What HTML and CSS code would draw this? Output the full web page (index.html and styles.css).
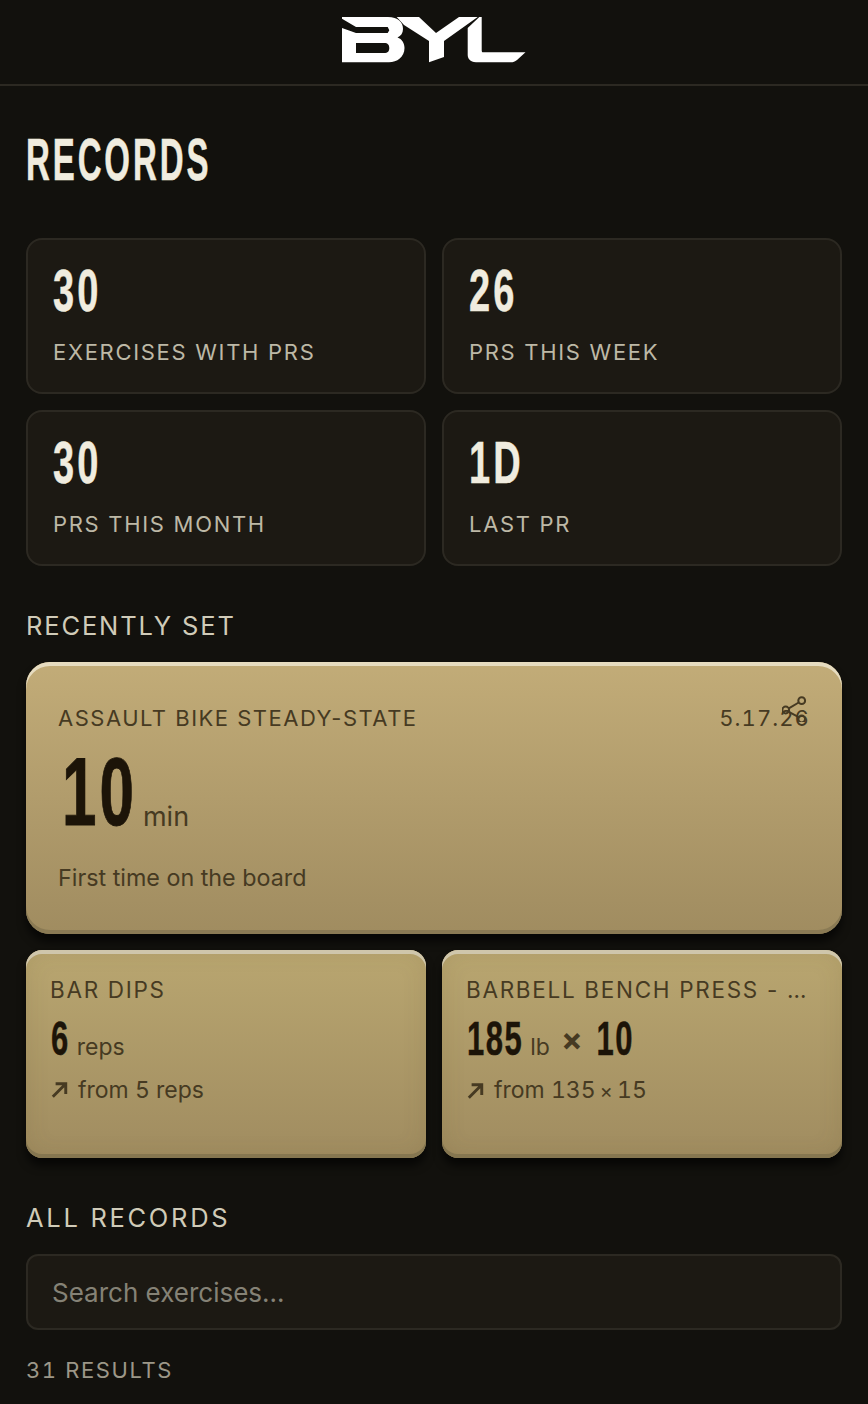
FILE: index.html
```html
<!DOCTYPE html>
<html lang="en">
<head>
<meta charset="utf-8">
<title>Records</title>
<link rel="stylesheet" href="styles.css">
</head>
<body>
<header class="topbar">
  <svg class="logo" viewBox="0 0 184 46" aria-label="BYL">
    <path fill="#fff" fill-rule="evenodd" d="M0 0H46C56 0 61 5 61 12C61 16 59 19 55.5 20.5C60 22 62.5 26 62.5 31C62.5 40 55 45.3 47 45.3H0V11L14 16H45.7L47.3 13.3L45.7 10H14L0 1.7ZM14 26V36H42C46 36 47.3 34 47.3 31C47.3 28 46 26 42 26Z"/>
    <path fill="#fff" d="M54.7 0H77L94 16L117 0H135.7L102 24V40L87 45.3V24L62 8Z"/>
    <path fill="#fff" d="M137.3 0H139.7V33C139.7 34.5 140 35.3 141 35.3H183.5L175 43C173 44.5 171 45.3 169 45.3H134C128 45.3 125.7 41 125.7 38V11Z"/>
  </svg>
</header>
<main class="page">
  <h1 class="title"><span class="cond">RECORDS</span></h1>
  <section class="stats">
    <div class="stat"><div class="stat-num"><span class="cond">30</span></div><div class="stat-label">EXERCISES WITH PRS</div></div>
    <div class="stat"><div class="stat-num"><span class="cond">26</span></div><div class="stat-label">PRS THIS WEEK</div></div>
    <div class="stat"><div class="stat-num"><span class="cond">30</span></div><div class="stat-label">PRS THIS MONTH</div></div>
    <div class="stat"><div class="stat-num"><span class="cond">1D</span></div><div class="stat-label">LAST PR</div></div>
  </section>
  <h2 class="section-head">RECENTLY SET</h2>
  <article class="hero gold">
    <div class="hero-top">
      <span class="hero-name">ASSAULT BIKE STEADY-STATE</span>
      <span class="hero-date">5.17.26</span>
    </div>
    <svg class="share" viewBox="0 0 28 28" aria-label="Share">
      <circle cx="19.7" cy="6.7" r="3.4"/><circle cx="3.7" cy="16" r="3.4"/><circle cx="19.7" cy="25" r="3.4"/>
      <path d="M6.8 14.3L16.7 8.5M6.8 17.8L16.7 23.2"/>
    </svg>
    <div class="hero-value"><span class="cond hero-num">10</span><span class="hero-unit">min</span></div>
    <div class="hero-note">First time on the board</div>
  </article>
  <section class="pair">
    <article class="mini gold">
      <div class="mini-name">BAR DIPS</div>
      <div class="mini-value"><span class="cond mini-num">6</span><span class="mini-unit">reps</span></div>
      <div class="mini-from"><svg class="arrow" viewBox="0 0 16 16"><path d="M2.5 14L14 2.5M5 2.5H14V11.5"/></svg><span>from 5 reps</span></div>
    </article>
    <article class="mini gold">
      <div class="mini-name">BARBELL BENCH PRESS - …</div>
      <div class="mini-value"><span class="cond mini-num">185</span><span class="mini-unit lb">lb</span><span class="times">×</span><span class="cond mini-num">10</span></div>
      <div class="mini-from"><svg class="arrow" viewBox="0 0 16 16"><path d="M2.5 14L14 2.5M5 2.5H14V11.5"/></svg><span>from 135 <span class="small-x">×</span> 15</span></div>
    </article>
  </section>
  <h2 class="section-head all-head">ALL RECORDS</h2>
  <input class="search" type="text" placeholder="Search exercises…">
  <div class="results">31 RESULTS</div>
</main>
</body>
</html>
```
FILE: styles.css
```css
* { box-sizing: border-box; }
html, body { margin: 0; padding: 0; }
body {
  background: #12110d;
  color: #f0ecdf;
  font-family: Inter, "Liberation Sans", Arial, sans-serif;
  height: 1404px;
  overflow: hidden;
}
.topbar {
  height: 86px;
  border-bottom: 2px solid #2c2922;
  display: flex;
  justify-content: center;
  padding-top: 17px;
}
.logo { width: 184px; height: 46px; display: block; }
.page { padding: 0 26px; }
.cond {
  font-family: "Liberation Sans Narrow", "Liberation Sans", sans-serif;
  font-weight: 700;
  display: inline-block;
  line-height: .693;
  transform-origin: 0 100%;
  -webkit-text-stroke: .3px currentColor;
}
.title {
  display: flex;
  margin: 0;
  padding-top: 73px;
  height: 152px;
  font-size: 33px;
  letter-spacing: 2.9px;
  color: #f0ecdf;
}
.title .cond { align-self: flex-start; transform: scaleY(1.78); }
.stats {
  display: grid;
  grid-template-columns: minmax(0, 1fr) minmax(0, 1fr);
  gap: 16px;
}
.stat {
  height: 156px;
  background: #1c1913;
  border: 2px solid #2c2922;
  border-radius: 16px;
  padding: 43px 25px 0;
}
.stat-num { height: 28px; font-size: 38px; letter-spacing: 3px; color: #f0ecdf; display: flex; align-items: flex-end; }
.stat-num .cond { transform: scaleY(1.58); }
.stat-label {
  margin-top: 27px;
  font-size: 22px;
  line-height: 28px;
  letter-spacing: 1.7px;
  color: #bdb8a6;
}
.section-head {
  margin: 0;
  font-size: 25.5px;
  font-weight: 400;
  line-height: 32px;
  letter-spacing: 1.85px;
  color: #d0cbb8;
  padding-top: 44px;
  height: 96px;
}
.all-head { letter-spacing: 2.7px; }
.gold {
  position: relative;
  background: linear-gradient(180deg, #c2ac78 0%, #a08c60 100%);
  box-shadow: inset 0 4px 0 #e6dcc0, inset 0 -4px 0 #8a7a54, 0 8px 8px rgba(0,0,0,.6);
}
.hero {
  height: 272px;
  border-radius: 24px;
  padding: 40px 32px 0;
  color: #463a22;
}
.hero-top { display: flex; justify-content: space-between; font-size: 22px; line-height: 32px; letter-spacing: 1.5px; }
.hero-date { font-variant-numeric: tabular-nums; letter-spacing: 1.1px; }
.share {
  position: absolute;
  right: 32px;
  top: 32px;
  width: 28px;
  height: 28px;
  fill: none;
  stroke: #463a22;
  stroke-width: 2;
}
.hero-value { display: flex; align-items: baseline; height: 78px; margin-top: 50px; }
.hero-num { font-size: 62px; letter-spacing: 3px; color: #1c1408; transform: scaleY(1.55); margin-left: 4px; -webkit-text-stroke-width: .6px; }
.hero-unit { font-size: 27px; line-height: 32px; margin-left: 6px; }
.hero-note { font-size: 23.3px; line-height: 32px; }
.pair { display: grid; grid-template-columns: minmax(0, 1fr) minmax(0, 1fr); gap: 16px; margin-top: 16px; }
.mini {
  height: 208px;
  border-radius: 16px;
  padding: 24px 24px 0;
  color: #463a22;
  background: linear-gradient(180deg, #b9a670 0%, #a08c60 100%);
  box-shadow: inset 0 4px 0 #cfc6ab, inset 0 -4px 0 #857650, inset 0 0 24px rgba(90,70,30,.12), 0 8px 8px rgba(0,0,0,.6);
}
.mini-name { font-size: 22.5px; line-height: 32px; letter-spacing: 1.7px; white-space: nowrap; overflow: hidden; }
.mini-value { display: flex; align-items: baseline; height: 40px; margin-top: 27px; }
.mini-num { font-size: 31px; letter-spacing: 1.5px; color: #1c1408; transform: scaleY(1.58); margin-left: 1px; }
.mini-unit { font-size: 23px; line-height: 28px; margin-left: 7px; }
.times { align-self: flex-start; font-size: 32px; line-height: 13px; font-weight: 700; margin: 0 13px 0 11px; }
.mini-from { display: flex; align-items: center; gap: 10px; font-size: 23px; line-height: 34px; }
.mini-from span { font-variant-numeric: tabular-nums; }
.arrow { width: 18px; height: 18px; fill: none; stroke: #463a22; stroke-width: 2.6; flex: none; }
.small-x { font-size: 20px; margin: 0 -2px; }
.search {
  display: block;
  width: 100%;
  height: 76px;
  background: #1c1913;
  border: 2px solid #2c2922;
  border-radius: 12px;
  padding: 0 24px;
  font-family: inherit;
  font-size: 26px;
  color: #f0ecdf;
}
.search::placeholder { color: #858276; opacity: 1; }
.results { margin-top: 24px; font-size: 22px; line-height: 32px; letter-spacing: 1.6px; color: #9c9788; font-variant-numeric: tabular-nums; }
```
